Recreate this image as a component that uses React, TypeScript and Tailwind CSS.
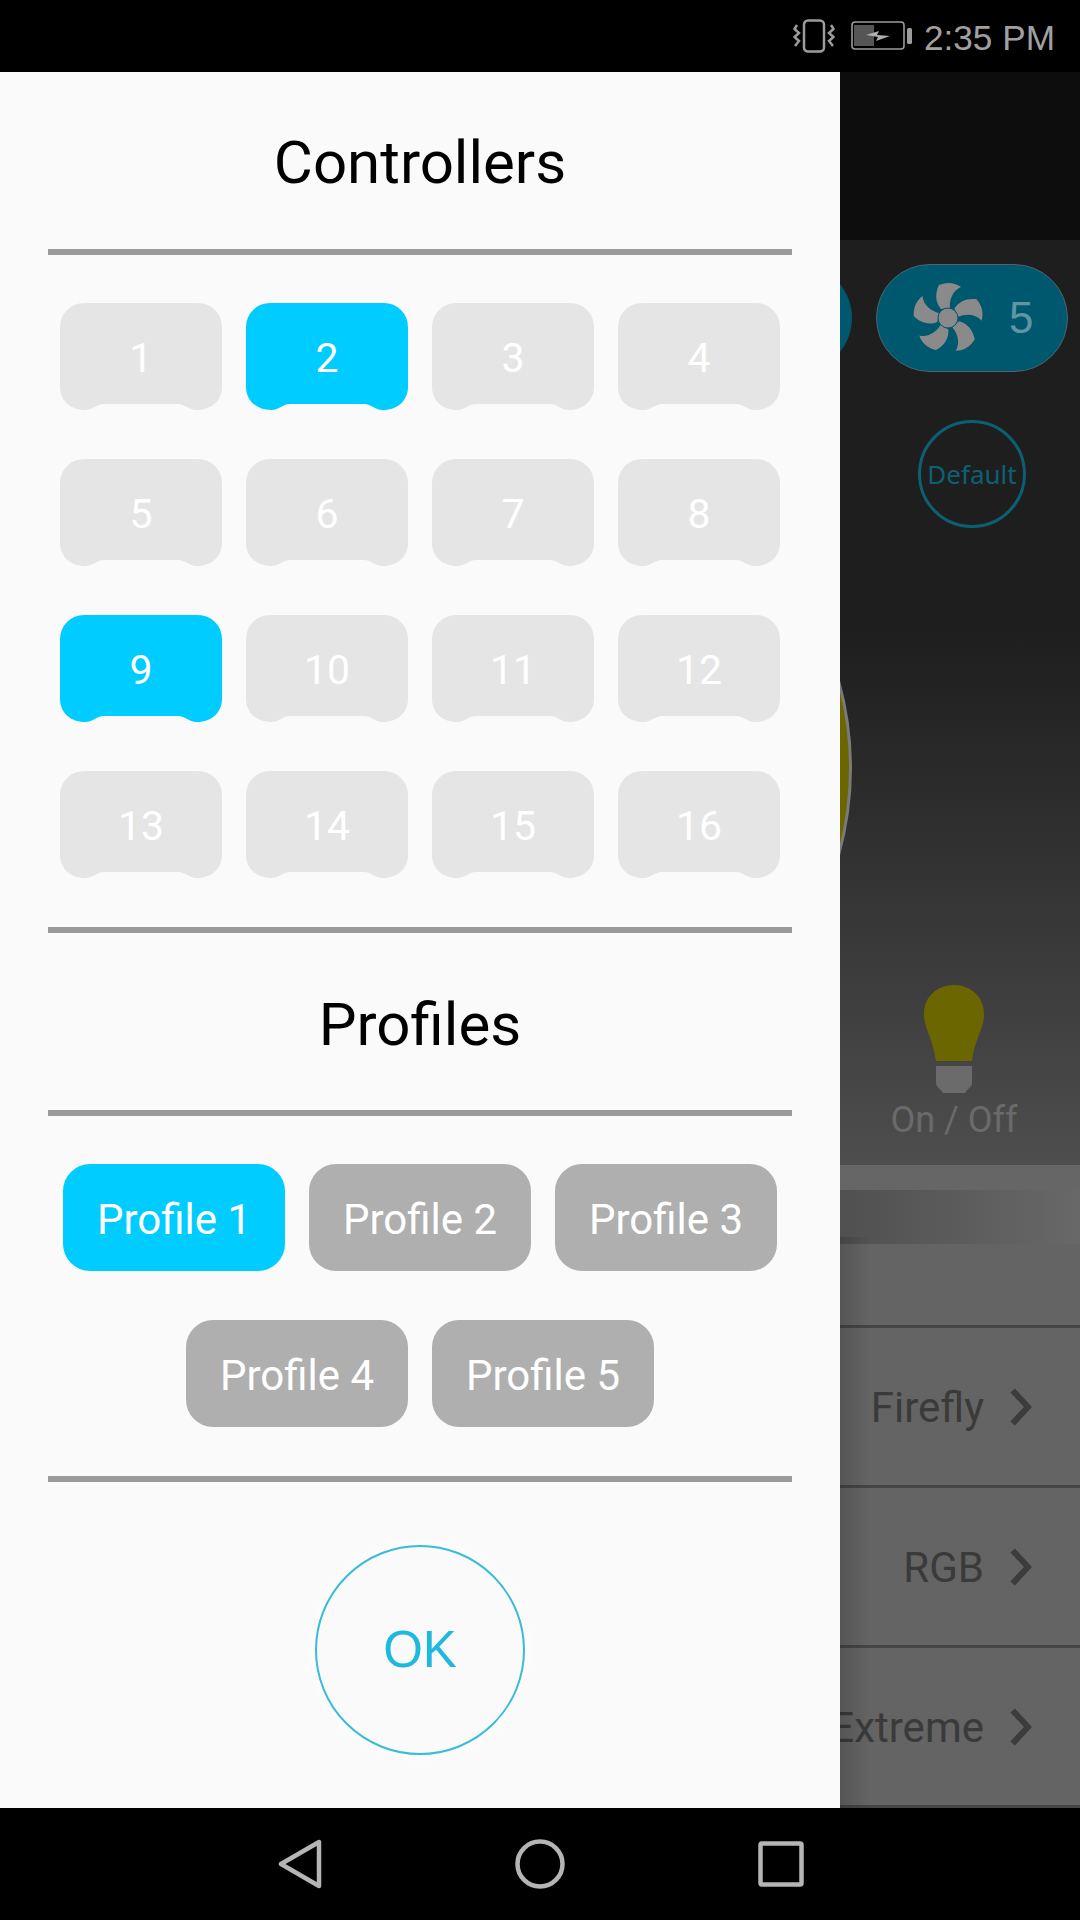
const controllers = Array.from({ length: 16 }, (_, i) => i + 1);
const activeControllers = [2, 9];
const rowFont = "font-['Roboto',sans-serif]";

function VibrateIcon() {
  return (
    <svg width="42" height="34" viewBox="0 0 42 34" fill="none" stroke="#9c9c9c" strokeWidth="2.5">
      <rect x="11" y="1.5" width="20" height="31" rx="4" />
      <path d="M4 6 L1.5 10 L6 14 L1.5 18 L6 22 L2 27" />
      <path d="M38 6 L40.5 10 L36 14 L40.5 18 L36 22 L40 27" />
    </svg>
  );
}

function BatteryIcon() {
  return (
    <svg width="62" height="30" viewBox="0 0 62 30">
      <rect x="1" y="1" width="52" height="27" rx="3" fill="none" stroke="#9c9c9c" strokeWidth="1.6" />
      <rect x="3" y="4" width="20" height="21" fill="#555555" />
      <path d="M15 14 L28 10 L26 14 L39 15 L25 20 L27 16 Z" fill="#b0b0b0" />
      <rect x="56" y="7" width="5" height="16" rx="1.5" fill="#9c9c9c" />
    </svg>
  );
}

function StatusBar() {
  return (
    <div className="h-[72px] shrink-0 bg-black flex items-center justify-end pr-[25px]">
      <VibrateIcon />
      <div className="ml-[16px]">
        <BatteryIcon />
      </div>
      <span className="ml-[11px] pt-[3px] text-[35.2px] leading-none text-[#a0a0a0] font-['Liberation_Sans',sans-serif]">2:35 PM</span>
    </div>
  );
}

function ControllerButton({ n, active }: { n: number; active: boolean }) {
  return (
    <div className="relative h-[107px] flex items-center justify-center pt-[3px]">
      <svg className="absolute inset-0" width="162" height="107" viewBox="0 0 162 107">
        <path
          className={active ? 'fill-[#00ccff]' : 'fill-[#e5e5e5]'}
          d="M24 0 H138 A24 24 0 0 1 162 24 V84 C162 97 152 107 137 107 C128 107 126 101 118 101 H44 C36 101 34 107 25 107 C10 107 0 97 0 84 V24 A24 24 0 0 1 24 0 Z"
        />
      </svg>
      <span className={`relative text-[41px] leading-none text-white ${rowFont}`}>{n}</span>
    </div>
  );
}

function ProfileButton({ label, active }: { label: string; active?: boolean }) {
  return (
    <div
      className={`w-[222px] h-[107px] pt-[3px] rounded-[27px] flex items-center justify-center text-[42px] text-white ${rowFont} ${
        active ? 'bg-[#00ccff]' : 'bg-[#afafaf]'
      }`}
    >
      {label}
    </div>
  );
}

function Divider() {
  return <div className="mx-[48px] h-[6px] shrink-0 bg-[#9a9a9a]" />;
}

function Drawer() {
  return (
    <div className="relative z-10 w-[840px] shrink-0 bg-[#fafafa] flex flex-col">
      <div className={`h-[177px] pt-[5px] flex items-center justify-center text-[60px] text-black ${rowFont}`}>
        Controllers
      </div>
      <Divider />
      <div className="grid grid-cols-4 gap-x-[24px] gap-y-[49px] px-[60px] pt-[48px] pb-[49px]">
        {controllers.map((n) => (
          <ControllerButton key={n} n={n} active={activeControllers.includes(n)} />
        ))}
      </div>
      <Divider />
      <div className={`h-[177px] pt-[6px] flex items-center justify-center text-[60px] text-black ${rowFont}`}>
        Profiles
      </div>
      <Divider />
      <div className="flex flex-col items-center gap-y-[49px] pt-[48px] pb-[49px]">
        <div className="flex gap-x-[24px]">
          <ProfileButton label="Profile 1" active />
          <ProfileButton label="Profile 2" />
          <ProfileButton label="Profile 3" />
        </div>
        <div className="flex gap-x-[24px]">
          <ProfileButton label="Profile 4" />
          <ProfileButton label="Profile 5" />
        </div>
      </div>
      <Divider />
      <div className="flex justify-center pt-[63px]">
        <div className="w-[210px] h-[210px] rounded-full border-2 border-[#38bcd8] shadow-[0_0_14px_#ffffff] flex items-center justify-center text-[51px] text-[#1fb9e0] font-['Liberation_Sans',sans-serif]">
          OK
        </div>
      </div>
    </div>
  );
}

function FanIcon() {
  return (
    <svg width="72" height="72" viewBox="-36 -36 72 72" fill="#8a8a8a">
      {[0, 72, 144, 216, 288].map((deg) => (
        <path key={deg} transform={`rotate(${deg})`} d="M-7 -9 C-13 -16 -13 -25 -9 -33 C-2 -36 6 -36 13 -31 C5 -28 1 -18 2 -10 Z" />
      ))}
      <circle r="10" stroke="#00586f" strokeWidth="1" />
    </svg>
  );
}

function BulbIcon() {
  return (
    <svg width="60" height="108" viewBox="0 0 60 108">
      <path d="M30 0 C47 0 60 12 60 29 C60 44 52 50 48 76 H12 C8 50 0 44 0 29 C0 12 13 0 30 0 Z" fill="#6c6600" />
      <path d="M12 81 H48 V98 C48 102 44 103 41 108 H19 C16 103 12 102 12 98 Z" fill="#6b6b6b" />
    </svg>
  );
}

function ListRow({ label }: { label: string }) {
  return (
    <div className="h-[160px] shrink-0 border-t-[3px] border-[#454545] flex items-center justify-end pr-[48px] gap-[26px] overflow-hidden">
      <span className={`pt-[3px] text-[42px] leading-none whitespace-nowrap text-[#3a3a3a] ${rowFont}`}>{label}</span>
      <svg className="shrink-0" width="22" height="38" viewBox="0 0 22 38" fill="none" stroke="#3c3c3c" strokeWidth="6">
        <path d="M2.5 2.5 L18 19 L2.5 35.5" />
      </svg>
    </div>
  );
}

function Backdrop() {
  return (
    <div className="relative flex-1 min-w-0 overflow-hidden flex flex-col bg-[#646464]">
      <div className="h-[168px] shrink-0 bg-[#0d0d0d]" />
      <div className="h-[925px] shrink-0 bg-gradient-to-b from-[#1e1e1e] from-[42%] to-[#4e4e4e] flex flex-col pt-[24px]">
        <div className="flex gap-[24px] -ml-[96px]">
          <div className="w-[108px] h-[108px] shrink-0 rounded-full bg-[#00586f]" />
          <div className="w-[192px] h-[108px] shrink-0 rounded-full bg-[#00586f] border border-[#4a6670] flex items-center pl-[35px] gap-[25px]">
            <FanIcon />
            <span className="text-[44px] leading-none text-[#5f96a6] font-['Liberation_Sans',sans-serif]">5</span>
          </div>
        </div>
        <div className="mt-[48px] ml-[78px] w-[108px] h-[108px] shrink-0 rounded-full border-[3px] border-[#0b6173] flex items-center justify-center text-[26px] text-[#0b6173] font-['Noto_Sans',sans-serif]">
          Default
        </div>
        <div className="-mt-[85px] -ml-[638px] w-[650px] h-[650px] shrink-0 rounded-full bg-[#6c6600] border-[3px] border-[#7a7a7a]" />
        <div className="-mt-[108px] w-[228px] flex flex-col items-center">
          <BulbIcon />
          <span className={`mt-[6px] text-[36px] leading-[42px] whitespace-nowrap text-[#6a6a6a] ${rowFont}`}>On / Off</span>
        </div>
      </div>
      <div className="h-[25px] shrink-0 bg-[#666666]" />
      <div className="h-[54px] shrink-0 bg-gradient-to-r from-[#505050] to-[#686868]" />
      <div className="h-[81px] shrink-0" />
      <ListRow label="Firefly" />
      <ListRow label="RGB" />
      <ListRow label="Extreme" />
      <div className="h-[3px] shrink-0 bg-[#454545]" />
      <div className="absolute left-0 top-[1165px] bottom-0 w-[30px] bg-gradient-to-r from-black/15 to-transparent" />
    </div>
  );
}

function NavBar() {
  return (
    <div className="h-[112px] shrink-0 bg-black flex items-start pt-[31px] pl-[278px]">
      <svg width="44" height="50" viewBox="0 0 44 50" fill="none" stroke="#b5b5b5" strokeWidth="4.5" strokeLinejoin="round">
        <path d="M41 3 V47 L3 25 Z" />
      </svg>
      <svg className="ml-[193px]" width="50" height="50" viewBox="0 0 50 50" fill="none" stroke="#b5b5b5" strokeWidth="4.5">
        <circle cx="25" cy="25" r="22.5" />
      </svg>
      <svg className="ml-[193px] mt-[2px]" width="46" height="46" viewBox="0 0 46 46" fill="none" stroke="#b5b5b5" strokeWidth="4.5" strokeLinejoin="round">
        <rect x="2.5" y="2.5" width="41" height="41" rx="1.5" />
      </svg>
    </div>
  );
}

export default function App() {
  return (
    <div className="w-[1080px] h-[1920px] flex flex-col overflow-hidden bg-black">
      <StatusBar />
      <div className="h-[1736px] shrink-0 flex overflow-hidden">
        <Drawer />
        <Backdrop />
      </div>
      <NavBar />
    </div>
  );
}
